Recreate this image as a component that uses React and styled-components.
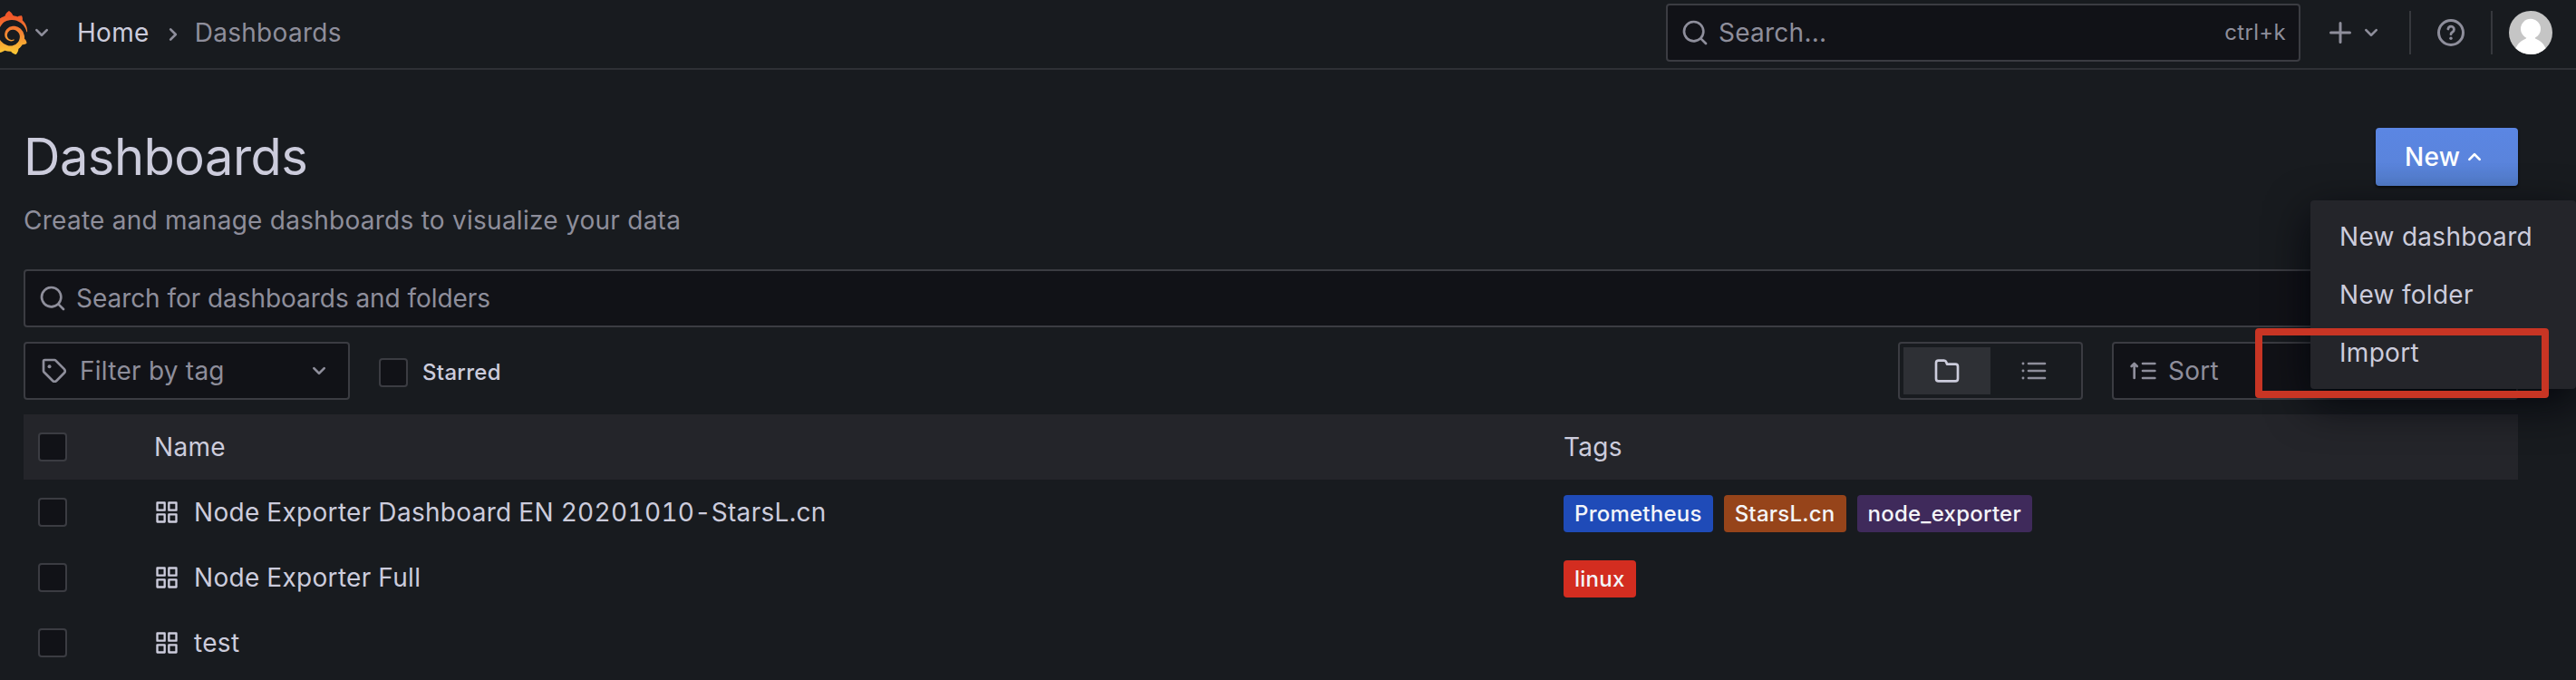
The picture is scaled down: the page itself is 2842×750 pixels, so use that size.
import React from "react";
import styled, { createGlobalStyle } from "styled-components";
import { SiGrafana } from "react-icons/si";

const c = {
  canvas: "#181b1f",
  input: "#111217",
  raised: "#24252a",
  border: "#3b3c42",
  text: "#ccccdc",
  muted: "#8e8e9b",
};

const GlobalStyle = createGlobalStyle`
  * { box-sizing: border-box; }
  body {
    margin: 0;
    background: ${c.canvas};
    color: ${c.text};
    font-family: Inter, "Liberation Sans", sans-serif;
    font-size: 28px;
    line-height: 44px;
    letter-spacing: 0.3px;
    overflow: hidden;
  }
  h1, p { margin: 0; }
`;

/* ---------- icons ---------- */

const Svg = styled.svg`
  display: block;
  flex: none;
  width: ${(p) => p.$size || 32}px;
  height: ${(p) => p.$size || 32}px;
  fill: currentColor;
`;

const paths = {
  search:
    "M21.71,20.29,18,16.61A9,9,0,1,0,16.61,18l3.68,3.68a1,1,0,0,0,1.42,0A1,1,0,0,0,21.71,20.29ZM11,18a7,7,0,1,1,7-7A7,7,0,0,1,11,18Z",
  down: "M17,9.17a1,1,0,0,0-1.41,0L12,12.71,8.46,9.17a1,1,0,0,0-1.41,0,1,1,0,0,0,0,1.42l4.24,4.24a1,1,0,0,0,1.42,0L17,10.59A1,1,0,0,0,17,9.17Z",
  up: "M17,13.41,12.71,9.17a1,1,0,0,0-1.42,0L7.05,13.41a1,1,0,0,0,0,1.42,1,1,0,0,0,1.41,0L12,11.29l3.54,3.54a1,1,0,0,0,.7.29,1,1,0,0,0,.71-.29A1,1,0,0,0,17,13.41Z",
  right:
    "M14.83,11.29,10.59,7.05a1,1,0,0,0-1.42,0,1,1,0,0,0,0,1.41L12.71,12,9.17,15.54a1,1,0,0,0,0,1.41,1,1,0,0,0,.71.29,1,1,0,0,0,.71-.29l4.24-4.24A1,1,0,0,0,14.83,11.29Z",
  plus: "M19,11H13V5a1,1,0,0,0-2,0v6H5a1,1,0,0,0,0,2h6v6a1,1,0,0,0,2,0V13h6a1,1,0,0,0,0-2Z",
  folder:
    "M19,5.5H12.72l-.32-1a3,3,0,0,0-2.84-2H5a3,3,0,0,0-3,3v13a3,3,0,0,0,3,3H19a3,3,0,0,0,3-3V8.5A3,3,0,0,0,19,5.5Zm1,13a1,1,0,0,1-1,1H5a1,1,0,0,1-1-1V5.5a1,1,0,0,1,1-1H9.56a1,1,0,0,1,.95.68l.54,1.64A1,1,0,0,0,12,7.5h7a1,1,0,0,1,1,1Z",
  apps: "M10,13H3a1,1,0,0,0-1,1v7a1,1,0,0,0,1,1h7a1,1,0,0,0,1-1V14A1,1,0,0,0,10,13ZM9,20H4V15H9ZM21,2H14a1,1,0,0,0-1,1v7a1,1,0,0,0,1,1h7a1,1,0,0,0,1-1V3A1,1,0,0,0,21,2ZM20,9H15V4h5Zm1,4H14a1,1,0,0,0-1,1v7a1,1,0,0,0,1,1h7a1,1,0,0,0,1-1V14A1,1,0,0,0,21,13Zm-1,7H15V15h5ZM10,2H3A1,1,0,0,0,2,3v7a1,1,0,0,0,1,1h7a1,1,0,0,0,1-1V3A1,1,0,0,0,10,2ZM9,9H4V4H9Z",
};

const Icon = ({ name, size }) => (
  <Svg viewBox="0 0 24 24" $size={size} aria-hidden="true">
    <path d={paths[name]} />
  </Svg>
);

const TagIcon = () => (
  <Svg viewBox="0 0 24 24" aria-hidden="true">
    <path
      d="M3 4a1 1 0 0 1 1-1h8.2a1 1 0 0 1 .7.3l7.3 7.3a2.2 2.2 0 0 1 0 3.1l-6.5 6.5a2.2 2.2 0 0 1-3.1 0L3.3 12.9a1 1 0 0 1-.3-.7Z"
      fill="none"
      stroke="currentColor"
      strokeWidth="2"
      strokeLinejoin="round"
    />
    <circle cx="7.9" cy="8.4" r="1.5" />
  </Svg>
);

const ListIcon = () => (
  <Svg viewBox="0 0 24 24" aria-hidden="true">
    {[6, 12, 18].map((y) => (
      <g key={y}>
        <circle cx="3" cy={y} r="1.1" />
        <rect x="6.5" y={y - 1} width="15.5" height="2" rx="1" />
      </g>
    ))}
  </Svg>
);

const SortIcon = () => (
  <Svg viewBox="0 0 24 24" aria-hidden="true">
    <path
      d="M5 18V6.5M2.7 8.3 5 6l2.3 2.3"
      fill="none"
      stroke="currentColor"
      strokeWidth="2"
      strokeLinecap="round"
      strokeLinejoin="round"
    />
    {[6, 12, 18].map((y) => (
      <rect key={y} x="11" y={y - 1} width="12" height="2" rx="1" />
    ))}
  </Svg>
);

const HelpIcon = () => (
  <Svg viewBox="0 0 24 24" $size={36} aria-hidden="true">
    <circle cx="12" cy="12" r="9" fill="none" stroke="currentColor" strokeWidth="2" />
    <path
      d="M9.9 9.3a2.2 2.2 0 1 1 3.3 2.2c-.8.5-1.2.9-1.2 1.7"
      fill="none"
      stroke="currentColor"
      strokeWidth="1.9"
      strokeLinecap="round"
    />
    <circle cx="12" cy="16.2" r="1.15" />
  </Svg>
);

const AvatarArt = () => (
  <Svg viewBox="0 0 48 48" $size={48} aria-hidden="true">
    <rect width="48" height="48" fill="#c5c5c5" />
    <circle cx="24" cy="19.8" r="11" fill="#fff" />
    <path d="M20 28.500h8c.5 2 2 2.500 4 3.500 5 2.500 8 7 9.500 12L38 48H10l-3.500-4c1.500-5 4.500-9.500 9.500-12 2-1 3.500-1.500 4-3.500Z" fill="#fff" />
  </Svg>
);

/* ---------- shared parts ---------- */

const Page = styled.div`
  position: relative;
  width: 2842px;
  height: 750px;
  overflow: hidden;
  background: ${c.canvas};
`;

const Field = styled.div`
  display: flex;
  align-items: center;
  width: ${(p) => (p.$width ? `${p.$width}px` : "auto")};
  height: 64px;
  padding: 0 ${(p) => p.$pad || 14}px;
  border: 2px solid ${c.border};
  border-radius: 4px;
  background: ${c.input};
  color: ${c.muted};
`;

const FieldText = styled.span`
  flex: 1;
  margin-left: ${(p) => p.$gap || 10}px;
  letter-spacing: ${(p) => (p.$tight ? -0.05 : 0.25)}px;
  white-space: nowrap;
`;

const Checkbox = styled.span`
  flex: none;
  width: 32px;
  height: 32px;
  border: 2px solid ${c.border};
  border-radius: 4px;
  background: ${c.input};
`;

/* ---------- top bar ---------- */

const TopBar = styled.header`
  display: flex;
  align-items: center;
  height: 77px;
  padding: 0 26px 3px 0;
  border-bottom: 2px solid #2e3035;
  color: ${c.muted};
`;

const Brand = styled.div`
  display: flex;
  align-items: center;
  margin-left: -16px;
  width: 101px;
`;

const Logo = styled(SiGrafana)`
  flex: none;
  width: 48px;
  height: 48px;
  margin-right: -2px;
`;

const Crumbs = styled.nav`
  display: flex;
  align-items: center;
  flex: 1;
`;

const Crumb = styled.span`
  color: ${(p) => (p.$current ? c.muted : c.text)};
`;

const CrumbArrow = styled.span`
  width: 32px;
  margin: 3px 8px 0 10px;
`;

const Shortcut = styled.span`
  font-size: 24px;
`;

const AddMenu = styled.div`
  display: flex;
  align-items: center;
  margin-left: 26px;
`;

const Divider = styled.span`
  width: 2px;
  height: 48px;
  margin: 0 ${(p) => p.$right}px 0 ${(p) => p.$left}px;
  background: #36383d;
`;

const Avatar = styled.span`
  width: 48px;
  height: 48px;
  border-radius: 50%;
  overflow: hidden;
`;

/* ---------- page body ---------- */

const Main = styled.main`
  padding: 64px 64px 0 26px;
`;

const Heading = styled.div`
  display: flex;
  align-items: flex-start;
  justify-content: space-between;
  height: 64px;
`;

const Title = styled.h1`
  font-size: 56px;
  font-weight: 400;
  line-height: 64px;
  letter-spacing: -0.5px;
`;

const NewButton = styled.div`
  display: flex;
  align-items: center;
  width: 157px;
  height: 64px;
  padding-left: 32px;
  border-radius: 4px;
  background: linear-gradient(180deg, #5b86e3 0%, #5a84dc 60%, #527dcc 100%);
  box-shadow: 0 2px 3px rgba(0, 0, 0, 0.6);
  color: #fff;
  font-weight: 500;
`;

const Subtitle = styled.p`
  margin: 16px 0 32px;
  color: ${c.muted};
  letter-spacing: 0.26px;
`;

const Filters = styled.div`
  display: flex;
  align-items: center;
  margin: 16px 0;
`;

const Starred = styled.div`
  display: flex;
  align-items: center;
  flex: 1;
  gap: 16px;
  margin: 4px 0 0 32px;
  font-size: 24px;
  font-weight: 500;
  line-height: 32px;
`;

const ViewSwitch = styled.div`
  display: flex;
  width: 204px;
  height: 64px;
  margin-right: 32px;
  padding: 4px;
  border: 2px solid ${c.border};
  border-radius: 4px;
`;

const ViewOption = styled.span`
  display: flex;
  align-items: center;
  justify-content: center;
  width: 96px;
  height: 52px;
  color: ${(p) => (p.$active ? c.text : c.muted)};
  background: ${(p) => (p.$active ? "#2e3035" : "transparent")};
`;

const Row = styled.div`
  display: grid;
  grid-template-columns: 128px 1555px 1fr;
  align-items: center;
  height: 72px;
  padding-left: 16px;
  background: ${(p) => (p.$head ? c.raised : "transparent")};
`;

const HeadCell = styled.span`
  font-weight: 400;
`;

const NameCell = styled.div`
  display: flex;
  align-items: center;
  gap: 16px;
  font-variant-numeric: tabular-nums;
`;

const TagList = styled.div`
  display: flex;
  gap: 12px;
  padding-top: 3px;
`;

const Tag = styled.span`
  height: 41px;
  padding: 0 12px;
  border-radius: 4px;
  background: ${(p) => p.$color};
  color: #f4f5f9;
  font-size: 24px;
  font-weight: 500;
  letter-spacing: 0.24px;
  line-height: 41px;
`;

/* ---------- overlays ---------- */

const Menu = styled.div`
  position: absolute;
  top: 221px;
  right: 0;
  width: 293px;
  padding: 8px 0;
  border-radius: 4px;
  background: ${c.raised};
  box-shadow: 0 16px 48px rgba(1, 4, 9, 0.85);
`;

const MenuItem = styled.div`
  height: 64px;
  padding-left: 32px;
  line-height: 64px;
  white-space: nowrap;
`;

const Highlight = styled.div`
  position: absolute;
  top: 362px;
  left: 2488px;
  width: 324px;
  height: 77px;
  border: 8px solid #c83524;
  border-radius: 4px;
`;

const dashboards = [
  {
    name: "Node Exporter Dashboard EN 20201010-StarsL.cn",
    tags: [
      ["Prometheus", "#1f4bb8"],
      ["StarsL.cn", "#96441a"],
      ["node_exporter", "#3f2a5b"],
    ],
  },
  { name: "Node Exporter Full", tags: [["linux", "#d32d20"]] },
  { name: "test", tags: [] },
];

export default function App() {
  return (
    <Page>
      <GlobalStyle />
      <TopBar>
        <Brand>
          <svg width="0" height="0" aria-hidden="true">
            <linearGradient id="brand" x1="0" y1="0" x2="0" y2="1">
              <stop offset="0.1" stopColor="#f0562a" />
              <stop offset="0.5" stopColor="#f58432" />
              <stop offset="1" stopColor="#fbcb35" />
            </linearGradient>
          </svg>
          <Logo fill="url(#brand)" />
          <Icon name="down" />
        </Brand>
        <Crumbs>
          <Crumb>Home</Crumb>
          <CrumbArrow>
            <Icon name="right" />
          </CrumbArrow>
          <Crumb $current>Dashboards</Crumb>
        </Crumbs>
        <Field $width={700}>
          <Icon name="search" />
          <FieldText>Search...</FieldText>
          <Shortcut>ctrl+k</Shortcut>
        </Field>
        <AddMenu>
          <Icon name="plus" size={36} />
          <Icon name="down" />
        </AddMenu>
        <Divider $left={26} $right={26} />
        <HelpIcon />
        <Divider $left={26} $right={18} />
        <Avatar>
          <AvatarArt />
        </Avatar>
      </TopBar>

      <Main>
        <Heading>
          <Title>Dashboards</Title>
          <NewButton>
            New
            <Icon name="up" />
          </NewButton>
        </Heading>
        <Subtitle>Create and manage dashboards to visualize your data</Subtitle>
        <Field>
          <Icon name="search" />
          <FieldText $tight>Search for dashboards and folders</FieldText>
        </Field>
        <Filters>
          <Field $width={360} $pad={16}>
            <TagIcon />
            <FieldText $gap={12}>Filter by tag</FieldText>
            <Icon name="down" />
          </Field>
          <Starred>
            <Checkbox />
            Starred
          </Starred>
          <ViewSwitch>
            <ViewOption $active>
              <Icon name="folder" />
            </ViewOption>
            <ViewOption>
              <ListIcon />
            </ViewOption>
          </ViewSwitch>
          <Field $width={448} $pad={16}>
            <SortIcon />
            <FieldText $gap={12}>Sort</FieldText>
          </Field>
        </Filters>
        <Row $head>
          <Checkbox />
          <HeadCell>Name</HeadCell>
          <HeadCell>Tags</HeadCell>
        </Row>
        {dashboards.map((d) => (
          <Row key={d.name}>
            <Checkbox />
            <NameCell>
              <Icon name="apps" size={28} />
              {d.name}
            </NameCell>
            <TagList>
              {d.tags.map(([label, color]) => (
                <Tag key={label} $color={color}>
                  {label}
                </Tag>
              ))}
            </TagList>
          </Row>
        ))}
      </Main>

      <Menu>
        <MenuItem>New dashboard</MenuItem>
        <MenuItem>New folder</MenuItem>
        <MenuItem>Import</MenuItem>
      </Menu>
      <Highlight />
    </Page>
  );
}
